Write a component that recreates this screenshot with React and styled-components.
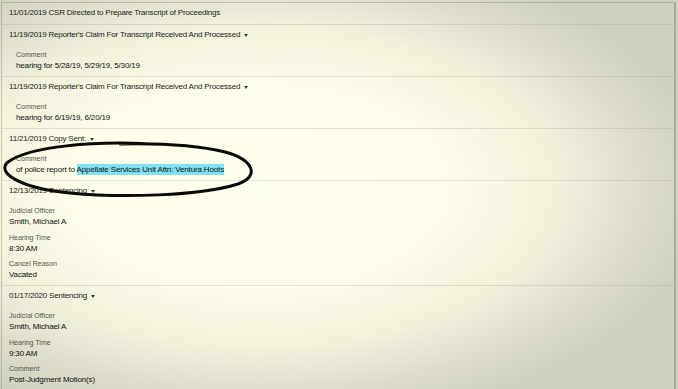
import React from "react";
import styled, { createGlobalStyle } from "styled-components";

const Global = createGlobalStyle`
  html, body { margin: 0; padding: 0; }
  body {
    width: 678px;
    height: 389px;
    overflow: hidden;
    font-family: "Liberation Sans", Arial, sans-serif;
    background: #d0d1bf;
  }
`;

const Screen = styled.div`
  position: relative;
  width: 678px;
  height: 389px;
  box-sizing: border-box;
  padding: 2px 2px 0 1px;
  background:
    radial-gradient(ellipse 66% 62% at 38% 48%, #fefeec 0%, #fdfde9 42%, #f1f1dc 66%, #dcdcc9 86%, #d0d1bf 100%);
  overflow: hidden;
`;

const Panel = styled.div`
  border: 1px solid rgba(120, 120, 100, 0.35);
  border-right: 2px solid rgba(110, 110, 95, 0.4);
  border-bottom: 2px solid rgba(120, 120, 100, 0.3);
  display: flex;
  flex-direction: column;
`;

const Row = styled.div`
  padding: 4px 0 5px;
  border-bottom: 1px solid rgba(150, 150, 130, 0.25);
  &:last-child { border-bottom: none; }
`;

const Header = styled.div`
  display: flex;
  align-items: center;
  gap: 4px;
  padding-left: 7px;
  height: 12px;
  line-height: 12px;
  font-size: 8px;
  letter-spacing: -0.2px;
  color: #1c1c24;
`;

const Caret = styled.span`
  width: 0;
  height: 0;
  border-left: 2.5px solid transparent;
  border-right: 2.5px solid transparent;
  border-top: 3px solid #3a3a40;
  margin-top: 1px;
`;

const Details = styled.div`
  margin-top: 9px;
  padding-left: ${(p) => (p.$indent ? "14px" : "7px")};
  display: flex;
  flex-direction: column;
  gap: 5.5px;
`;

const Field = styled.div`
  display: flex;
  flex-direction: column;
`;

const Label = styled.div`
  font-size: 7px;
  line-height: 10px;
  height: 10px;
  color: #55554f;
`;

const Value = styled.div`
  font-size: 8px;
  line-height: 11px;
  height: 11px;
  letter-spacing: -0.15px;
  color: #111114;
`;

const Mark = styled.span`
  background: #80e1f2;
  padding: 1px 0;
`;

const Ring = styled.svg`
  position: absolute;
  left: 0;
  top: 138px;
  width: 260px;
  height: 62px;
  pointer-events: none;
`;

const rows = [
  { title: "11/01/2019 CSR Directed to Prepare Transcript of Proceedings", caret: false },
  {
    title: "11/19/2019 Reporter's Claim For Transcript Received And Processed",
    caret: true,
    indent: true,
    fields: [["Comment", "hearing for 5/28/19, 5/29/19, 5/30/19"]],
  },
  {
    title: "11/19/2019 Reporter's Claim For Transcript Received And Processed",
    caret: true,
    indent: true,
    fields: [["Comment", "hearing for 6/19/19, 6/20/19"]],
  },
  {
    title: "11/21/2019 Copy Sent:",
    caret: true,
    indent: true,
    fields: [
      [
        "Comment",
        <>
          of police report to <Mark>Appellate Services Unit Attn: Ventura Hoots</Mark>
        </>,
      ],
    ],
  },
  {
    title: "12/13/2019 Sentencing",
    caret: true,
    fields: [
      ["Judicial Officer", "Smith, Michael A"],
      ["Hearing Time", "8:30 AM"],
      ["Cancel Reason", "Vacated"],
    ],
  },
  {
    title: "01/17/2020 Sentencing",
    caret: true,
    fields: [
      ["Judicial Officer", "Smith, Michael A"],
      ["Hearing Time", "9:30 AM"],
      ["Comment", "Post-Judgment Motion(s)"],
    ],
  },
];

export default function App() {
  return (
    <>
      <Global />
      <Screen>
        <Panel>
          {rows.map((r, i) => (
            <Row key={i}>
              <Header>
                <span>{r.title}</span>
                {r.caret && <Caret />}
              </Header>
              {r.fields && (
                <Details $indent={r.indent}>
                  {r.fields.map(([l, v], j) => (
                    <Field key={j}>
                      <Label>{l}</Label>
                      <Value>{v}</Value>
                    </Field>
                  ))}
                </Details>
              )}
            </Row>
          ))}
        </Panel>
        <Ring viewBox="0 0 260 62">
          <path
            d="M150 6 C 95 3, 30 8, 8 24 C -4 34, 18 50, 70 55 C 120 60, 200 58, 238 46 C 260 38, 254 22, 225 14 C 200 8, 165 5, 120 6"
            fill="none"
            stroke="#0a0a0a"
            strokeWidth="3"
            strokeLinecap="round"
          />
        </Ring>
      </Screen>
    </>
  );
}
